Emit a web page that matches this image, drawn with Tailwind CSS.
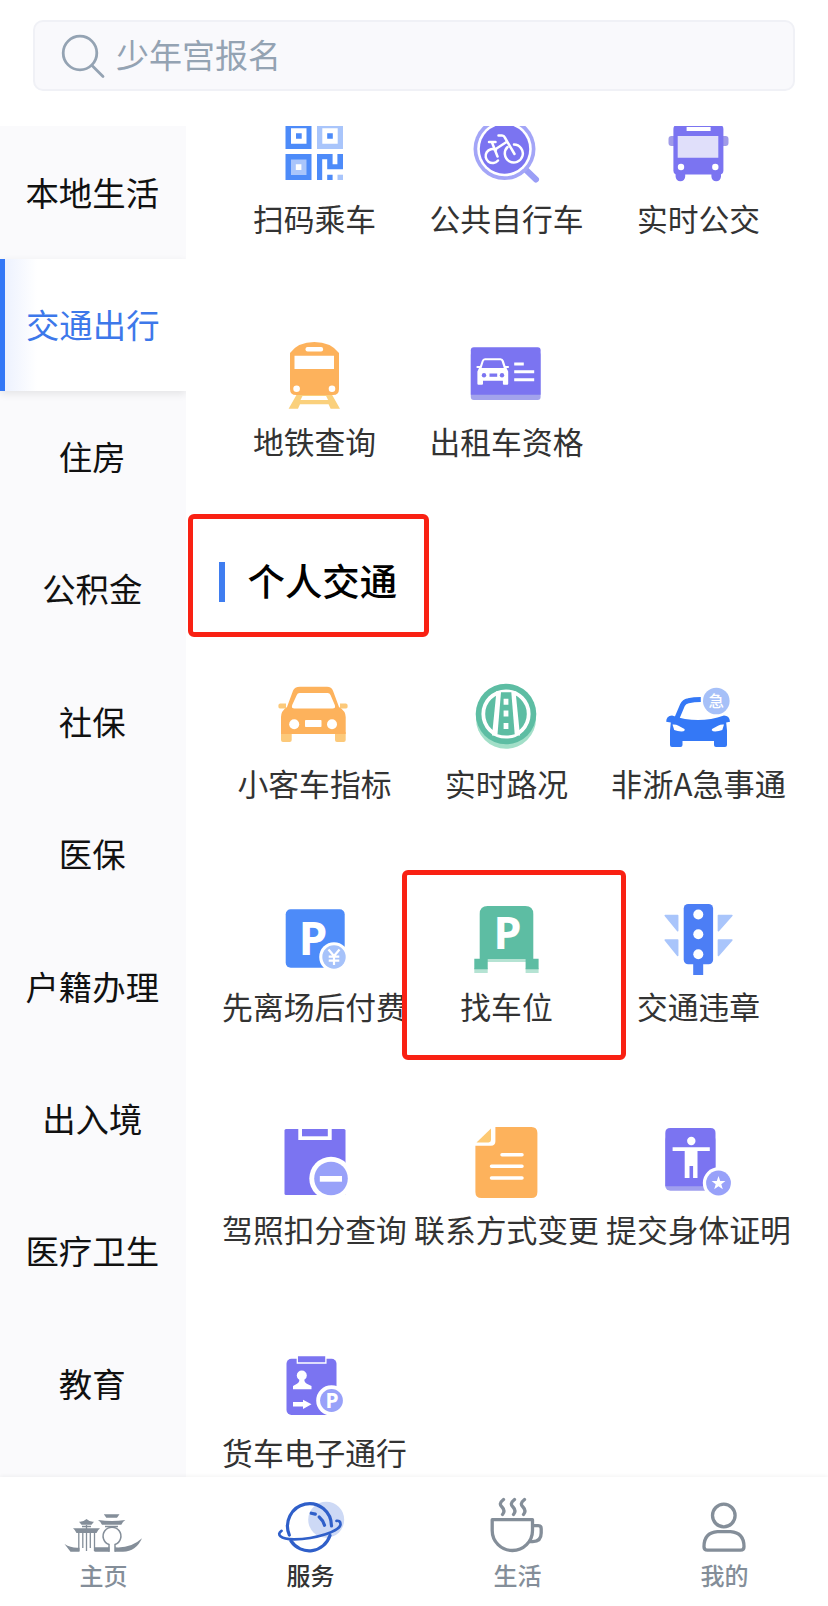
<!DOCTYPE html>
<html lang="zh-CN">

<head>
  <meta charset="UTF-8" />
  <meta name="viewport" content="width=device-width, initial-scale=1.0" />
  <title>服务</title>
  <script src="https://cdn.jsdelivr.net/npm/@tailwindcss/browser@4"></script>
</head>

<body class="bg-white font-['Noto_Sans_CJK_SC','Noto_Sans',sans-serif]">
  <div class="w-[828px] h-[1606px] flex flex-col overflow-hidden">

    <!-- Search -->
    <header class="h-[126px] shrink-0 px-[33px] pt-5">
      <div class="h-[71px] rounded-[10px] border-2 border-[#f0f1f6] bg-[#f9f9fc] flex items-center pl-[26px] text-[#94a3b3]">
        <svg class="w-[46px] h-[46px]" viewBox="0 0 46 46" fill="none" stroke="currentColor" stroke-width="2.8" stroke-linecap="round">
          <circle cx="19" cy="20" r="16.8" />
          <path d="M31 32.5L42 43.5" />
        </svg>
        <span class="ml-[9px] -mt-[3px] text-[33px] leading-[40px]">少年宫报名</span>
      </div>
    </header>

    <div class="flex h-[1351px] shrink-0">
      <!-- Categories -->
      <aside class="w-[185.5px] shrink-0 bg-[#fafafc] overflow-hidden text-[33.4px] text-[#111] text-center">
        <div class="h-[133px] pr-px pb-px flex items-center justify-center">本地生活</div>
        <div class="relative h-[132.4px] flex items-center justify-center border-l-[5px] border-[#3478f6] pr-[5px] pb-[3px] text-[#3d78ea] bg-linear-to-r from-[#edf2fe] to-white to-[32px] shadow-[0_3px_8px_rgba(0,0,0,0.09)]">交通出行</div>
        <div class="h-[132.4px] pr-px pb-[3px] flex items-center justify-center">住房</div>
        <div class="h-[132.4px] pr-px pb-[3px] flex items-center justify-center">公积金</div>
        <div class="h-[132.4px] pr-px pb-[3px] flex items-center justify-center">社保</div>
        <div class="h-[132.4px] pr-px pb-[3px] flex items-center justify-center">医保</div>
        <div class="h-[132.4px] pr-px pb-[3px] flex items-center justify-center">户籍办理</div>
        <div class="h-[132.4px] pr-px pb-[3px] flex items-center justify-center">出入境</div>
        <div class="h-[132.4px] pr-px pb-[3px] flex items-center justify-center">医疗卫生</div>
        <div class="h-[132.4px] pr-px pb-[3px] flex items-center justify-center">教育</div>
      </aside>

      <!-- Services -->
      <main class="flex-1 overflow-hidden px-[33px] text-[30.8px] leading-[40px] text-[#333] whitespace-nowrap">
        <div class="-mt-[12px] grid grid-cols-[192px_192px_192px] auto-rows-[223px]">
          <div class="flex flex-col items-center gap-1">
            <svg class="w-24 h-20 shrink-0 -ml-0.5" viewBox="0 0 96 80">
              <path fill="#4d8bf9" d="M19.5 9h26v26h-26zM19.5 40h26v26h-26z" />
              <path fill="#a9c5fb" d="M51 9h26v26H51z" />
              <path fill="#fff" d="M25 14.3h15.5v15.4H25zM56.3 14.3h15.4v15.4H56.3z" />
              <path fill="#4d8bf9" d="M30 19.2h5.7v5.6H30zM61.2 19.2h5.6v5.6h-5.6z" />
              <path fill="#a9c5fb" d="M25 45.5h15.5V61H25z" />
              <path fill="#fff" d="M29.8 50.2h5.6v5.8h-5.6z" />
              <path fill="#4d8bf9" d="M51 40h15.6v10.3h4.8V40H77v15.3H61.2V45.3h-5V66H51zM61.2 60.7h5.4V66h-5.4z" />
              <path fill="#a9c5fb" d="M71.5 60.7H77V66h-5.5z" />
            </svg>
            <span>扫码乘车</span>
          </div>
          <div class="flex flex-col items-center gap-1">
            <svg class="w-24 h-20 shrink-0 -ml-0.5" viewBox="0 0 96 80" fill="none" stroke-linecap="round" stroke-linejoin="round">
              <path stroke="#9a9ef6" stroke-width="6" d="M66 54l12 11.5" />
              <circle cx="46.5" cy="35" r="31" fill="#a3a5f7" />
              <circle cx="46.5" cy="35" r="27.3" fill="#fff" />
              <circle cx="46.5" cy="35" r="24.7" fill="#7b74f1" />
              <g stroke="#fff" stroke-width="2.5">
                <path d="M40 46.5a7 7 0 1 1-2-10.6" />
                <path d="M49.6 33A9 9 0 1 0 56 30.5" />
                <path d="M40.5 21.5h3.5q2 0 2.8 2L56.5 40M31 28h6.5M34 28.5l5.5 14M37 35.5l11.5-7.5" />
              </g>
            </svg>
            <span>公共自行车</span>
          </div>
          <div class="flex flex-col items-center gap-1">
            <svg class="w-24 h-20 shrink-0 -ml-0.5" viewBox="0 0 96 80">
              <path fill="#a09be8" d="M24 22h-2.5q-3 0-3 3v4q0 3 3 3H24zM73 22h2.5q3 0 3 3v4q0 3-3 3H73z" />
              <rect x="23.4" y="11" width="50" height="49.5" rx="4" fill="#7b74f1" />
              <path fill="#7b74f1" d="M25.6 58h9.6v4.5a4.8 4.8 0 0 1-9.6 0zM61.4 58H71v4.5a4.8 4.8 0 0 1-9.6 0z" />
              <path fill="#fff" d="M36.6 13h24v4h-24z" />
              <path fill="#e0dffa" d="M27.7 22h40.6v21.7H27.7z" />
              <circle cx="31" cy="53" r="3.2" fill="#fff" />
              <circle cx="65.3" cy="53" r="3.2" fill="#fff" />
            </svg>
            <span>实时公交</span>
          </div>
          <div class="flex flex-col items-center gap-1">
            <svg class="w-24 h-20 shrink-0 -ml-0.5" viewBox="0 0 96 80">
              <path fill="#fad07c" fill-rule="evenodd" d="M31 57h34.6l8.4 14.7h-9.4l-2-4.4H34l-2 4.4h-9.4zM36.5 59l-2 4h27.6l-2-4z" />
              <path fill="#fdb25c" d="M24 16Q32 5 48.3 5T73 16v36q0 6-6 6H30q-6 0-6-6z" />
              <rect x="39.5" y="10" width="17.6" height="4.5" rx="2" fill="#fff" />
              <path fill="#fff" d="M28.5 18.7H68V32H28.5z" />
              <circle cx="30.6" cy="51.8" r="3.3" fill="#fff" />
              <circle cx="66" cy="51.8" r="3.3" fill="#fff" />
            </svg>
            <span>地铁查询</span>
          </div>
          <div class="flex flex-col items-center gap-1">
            <svg class="w-24 h-20 shrink-0 -ml-0.5" viewBox="0 0 96 80">
              <rect x="12.8" y="15" width="69.8" height="48" rx="3" fill="#a3a3ec" />
              <path fill="#7b74f1" d="M15.8 10.3h63.8q3 0 3 3v44.4H12.8V13.3q0-3 3-3z" />
              <path fill="#fff" fill-rule="evenodd" d="M27 21.3h15.5q2.5 0 3.3 2.5l1.7 5.2h3.3v2h-2.3l1.7 3.5v12.3q0 1-1 1h-3.3q-1 0-1-1v-3H25v3q0 1-1 1h-3.6q-1 0-1-1V34.5L21 31h-2.4v-2H22l1.8-5.2q.8-2.5 3.2-2.5zM27 23.3q-1 0-1.3 1L23.6 31h22.2l-2.2-6.7q-.3-1-1.3-1z" />
              <path fill="#7b74f1" d="M31.5 36.5h7.7v3.3h-7.7z" />
              <circle cx="26" cy="38.2" r="2.2" fill="#7b74f1" />
              <circle cx="44" cy="38.2" r="2.2" fill="#7b74f1" />
              <path fill="none" stroke="#fff" stroke-width="3" d="M56.2 27h9.6M56.2 34.8h20M56.2 42.7h20" />
            </svg>
            <span>出租车资格</span>
          </div>
        </div>

        <!-- Section title -->
        <div class="relative h-[119px] flex items-start pt-[2px]">
          <div class="absolute -left-[30.5px] -top-[46px] w-[241px] h-[123px] rounded-md border-5 border-[#f92113]"></div>
          <i class="block w-[6px] h-10 bg-[#3f7df0]"></i>
          <h2 class="ml-[23px] text-[37.4px] font-medium leading-[37px] text-black">个人交通</h2>
        </div>

        <div class="grid grid-cols-[192px_192px_192px] auto-rows-[223px]">
          <div class="flex flex-col items-center gap-1">
            <svg class="w-24 h-20 shrink-0 -ml-0.5" viewBox="0 0 96 80">
              <path fill="#fcc97a" d="M14 24.5h6v5h-6q-1.7 0-1.7-2.5t1.7-2.5zM74 24.5h6q1.7 0 1.7 2.5T80 29.5h-6zM15 53h10.7v8q0 2-2 2H17q-2 0-2-2zM69 53h10.7v8q0 2-2 2H71q-2 0-2-2z" />
              <path fill="#fdb25c" fill-rule="evenodd" d="M34 7.7h27q4.5 0 6 4L73 28q6.7 4 6.7 10v17H15V38q0-6 6-10l6-16.3q1.5-4 7-4zM33.5 14q-2 0-2.7 2l-4.6 10q-1.2 3.5 2.3 3.5h38q3.5 0 2.3-3.5L64.5 16q-.8-2-2.8-2z" />
              <circle cx="28.2" cy="45.3" r="5" fill="#fff" />
              <circle cx="66" cy="45.3" r="5" fill="#fff" />
              <rect x="39" y="41" width="16.5" height="7" rx=".8" fill="#fff" />
            </svg>
            <span>小客车指标</span>
          </div>
          <div class="flex flex-col items-center gap-1">
            <svg class="w-24 h-20 shrink-0 -ml-0.5" viewBox="0 0 96 80">
              <circle cx="48" cy="39.7" r="30" fill="#a2dfc8" />
              <circle cx="48" cy="35" r="30.3" fill="#5dbda3" />
              <circle cx="48" cy="35" r="22.7" fill="#5dbda3" stroke="#fff" stroke-width="3.8" />
              <path fill="#fff" d="M38.5 12h19L62 56.5H34z" />
              <path fill="#5dbda3" d="M43 13.3h10.3l3.4 42q-8.5 2.5-17.2 0z" />
              <path fill="#fff" d="M45.6 19.7h4.8v6h-4.8zM45.6 31.5h4.8v6h-4.8zM45.6 44h4.8v6h-4.8z" />
            </svg>
            <span>实时路况</span>
          </div>
          <div class="flex flex-col items-center gap-1">
            <svg class="w-24 h-20 shrink-0 -ml-0.5" viewBox="0 0 96 80">
              <path fill="none" stroke="#3478f6" stroke-width="5" d="M50.8 20.5q-7 0-12.5 1.2-4.3.8-5.8 4.3L27 39" />
              <path fill="#3478f6" d="M22 36.5q13 4.5 26 4.5t26-4.5q5.5 0 6 6.2l-3.8.8.8 8V66q0 2-2 2H66q-2 0-2-2v-4H32.5v4q0 2-2 2H22q-2 0-2-2V51.5l.8-8-4.6-.8q0-5.7 5.8-6.2z" />
              <path fill="#fff" d="M22.5 45.5q3-.5 6 1.3l6 3.2q1 1.5-1 2.3-5 .5-9.3-1.3zM74 45.5q-3-.5-6 1.3L62 50q-1 1.5 1 2.3 5 .5 9.3-1.3z" />
              <circle cx="66.3" cy="22" r="13.3" fill="#a6c0f8" />
              <text x="66.3" y="27.7" font-size="15.5" font-weight="500" text-anchor="middle" fill="#fff">急</text>
            </svg>
            <span class="text-[31.2px]">非浙A急事通</span>
          </div>
          <div class="flex flex-col items-center gap-1">
            <svg class="w-24 h-20 shrink-0 -ml-0.5 overflow-visible" viewBox="0 0 96 80">
              <rect x="19.7" y="7.3" width="59" height="58.5" rx="5" fill="#4d8bf9" />
              <text x="47" y="53.3" font-size="46" font-weight="700" font-family="Noto Sans" text-anchor="middle" fill="#fff">P</text>
              <circle cx="68" cy="55" r="14.8" fill="#fff" />
              <circle cx="68" cy="55" r="11.7" fill="#a6c2fa" />
              <path fill="none" stroke="#fff" stroke-width="2.2" d="M62.5 47.5l5.5 6.5 5.5-6.5M68 54v9M62.7 54.7h10.6M62.7 58.7h10.6" />
            </svg>
            <span>先离场后付费</span>
          </div>
          <div class="relative flex flex-col items-center gap-1">
            <div class="absolute -left-[9px] -top-8 w-[224px] h-[190px] rounded-md border-5 border-[#f92113]"></div>
            <svg class="w-24 h-20 shrink-0 -ml-0.5 overflow-visible" viewBox="0 0 96 80">
              <path fill="#b5e3d3" d="M16.3 66h13.4v5H16.3zM67.6 66h13v5h-13zM29 56h39v4H29z" />
              <path fill="#5dbda3" d="M29.7 4h37.6q8 0 8 8v44.7h5.3v10.6h-13V57H29.7v10.3H16.3V56.7h5.4V12q0-8 8-8z" />
              <text x="49.5" y="46.8" font-size="45" font-weight="700" font-family="Noto Sans" text-anchor="middle" fill="#fff">P</text>
            </svg>
            <span>找车位</span>
          </div>
          <div class="flex flex-col items-center gap-1">
            <svg class="w-24 h-20 shrink-0 -ml-0.5" viewBox="0 0 96 80">
              <path fill="#a9c5fb" stroke="#a9c5fb" stroke-width="1.5" stroke-linejoin="round" d="M15.2 13.5h12.5v15.3zM15.2 38h12.5v15.5zM68.4 13.5h13.5l-13.5 15.3zM68.4 38h13.5l-13.5 15.5z" />
              <path fill="#4c7ef5" d="M43.2 60h10v13h-10z" />
              <rect x="33.7" y="2" width="29.4" height="60.3" rx="4.5" fill="#4c7ef5" />
              <circle cx="48.3" cy="12.5" r="5" fill="#fff" />
              <circle cx="48.3" cy="32.2" r="5" fill="#fff" />
              <circle cx="48.3" cy="52.3" r="5" fill="#fff" />
            </svg>
            <span>交通违章</span>
          </div>
          <div class="flex flex-col items-center gap-1">
            <svg class="w-24 h-20 shrink-0 -ml-0.5" viewBox="0 0 96 80">
              <rect x="18.5" y="4" width="61" height="66" rx="1.5" fill="#7b74f1" />
              <path fill="#fff" d="M32.3 3.5h33.4V15H32.3z" />
              <path fill="#7b74f1" d="M36 4h25.8v7.3H36z" />
              <circle cx="65" cy="53.5" r="21.7" fill="#fff" />
              <circle cx="65" cy="53.5" r="16.8" fill="#98a1f9" />
              <path fill="#fff" d="M53.8 51H76v5.7H53.8z" />
            </svg>
            <span>驾照扣分查询</span>
          </div>
          <div class="flex flex-col items-center gap-1">
            <svg class="w-24 h-20 shrink-0 -ml-0.5" viewBox="0 0 96 80">
              <path fill="#fdb25c" d="M37.4 2h36q6 0 6 6v59q0 6-6 6h-50q-6 0-6-6V20.7H33q4.4 0 4.4-4.4z" />
              <path fill="#fdc973" d="M33 3.5V15q0 2.4-2.4 2.4H18.5z" />
              <path fill="none" stroke="#fff" stroke-width="3.5" stroke-linecap="round" d="M44 29.7h20M33.5 41.3H64M33.5 53H64" />
            </svg>
            <span>联系方式变更</span>
          </div>
          <div class="flex flex-col items-center gap-1">
            <svg class="w-24 h-20 shrink-0 -ml-0.5" viewBox="0 0 96 80">
              <rect x="15.3" y="10" width="50.2" height="55.7" rx="5" fill="#a09fee" />
              <path fill="#7b74f1" d="M20.3 3h40.2q5 0 5 5v53.2H15.3V8q0-5 5-5z" />
              <circle cx="41.3" cy="16" r="4.2" fill="#fff" />
              <path fill="#fff" d="M22.6 22.3h37.2V26H47.5v27h-4.4V41h-3.6v12h-4.8V26H22.6z" />
              <circle cx="68.5" cy="58" r="15.7" fill="#fff" />
              <circle cx="68.5" cy="58" r="12.4" fill="#98a1f9" />
              <path fill="#fff" d="M68.5 51l1.7 4.9 5.2.1-4.1 3.2 1.5 5-4.3-2.9-4.3 2.9 1.5-5-4.1-3.2 5.2-.1z" />
            </svg>
            <span>提交身体证明</span>
          </div>
          <div class="flex flex-col items-center gap-1">
            <svg class="w-24 h-20 shrink-0 -ml-0.5" viewBox="0 0 96 80">
              <rect x="20.5" y="10.7" width="50" height="56.3" rx="5" fill="#7b74f1" />
              <path fill="#7b74f1" stroke="#fff" stroke-width="1.3" d="M31.3 7.7h28.6V15H31.3z" />
              <circle cx="35.8" cy="27.5" r="5" fill="#fff" />
              <path fill="#fff" d="M33.3 30h5q-.5 4 2.5 5.7l4.7 2.3v3.3H27V38l4-2.3q3-1.7 2.3-5.7zM27 54h10v-2.3l8.5 4.6L37 61v-2.500H27z" />
              <circle cx="65.5" cy="52.5" r="15.3" fill="#fff" />
              <circle cx="65.5" cy="52.5" r="11.4" fill="#98a1f9" />
              <text x="66" y="60" font-size="21" font-weight="700" font-family="Noto Sans" text-anchor="middle" fill="#fff">P</text>
            </svg>
            <span>货车电子通行</span>
          </div>
        </div>
      </main>
    </div>

    <!-- Tab bar -->
    <nav class="relative h-[129px] shrink-0 grid grid-cols-4 bg-white pt-5 text-2xl leading-7 text-[#848e99] font-medium shadow-[0_-1px_4px_rgba(0,0,0,0.05)]">
      <div class="flex flex-col items-center gap-2">
        <svg class="w-20 h-14 -ml-0.5" viewBox="0 0 80 56" fill="currentColor">
          <path d="M1.5 47q7 4.5 15 3.7v4H7.5zM31.5 50.3h15v4.4h-15zM52 50.3q16 1.2 27-9-6 13.4-19 13.4h-8z" />
          <path d="M10 31.2h27q-2.5 2-3.5 4.8h-20q-1-2.8-3.5-4.8zM16 24.8q4 .5 7.5-2.8 3.5 3.3 7.5 2.8l-2.5 3h-10zM40.8 17.3h15.7l-2.5 3.5H43.3zM35 23q14 2 27.3 0-3 2-4 4.7H39q-1-2.7-4-4.7z" />
          <path fill="none" stroke="currentColor" stroke-width="1.3" d="M15.8 36v18M23.5 28v26M31.5 36v18M19.8 36v15M27.3 36v15M19 29.5h9M42 29.5h13" />
          <path fill="none" stroke="currentColor" stroke-width="1.5" d="M46 54.7V47.5A8.9 8.9 0 1 1 52 47.5V54.7" />
        </svg>
        <span>主页</span>
      </div>
      <div class="flex flex-col items-center gap-2">
        <svg class="w-20 h-14 -ml-0.5" viewBox="0 0 80 56" fill="none" stroke="#2f5fc9" stroke-width="3.2" stroke-linecap="round">
          <circle cx="56.2" cy="22.7" r="18" fill="#cdd9f5" stroke="none" />
          <path d="M19.3 38A22 22.5 0 1 1 61.5 29M60 38.5A22 22.5 0 0 1 21 44" />
          <path stroke-width="2.7" d="M11.5 33.8C6.5 37 9.5 42.3 24 42.3 46 42 70.5 34 70.5 27.2 70.5 24.5 69 23.5 66.5 23.8" />
          <path d="M41.3 16.2l4 .9M49.2 20q3.8 3.2 5.3 8.3" />
        </svg>
        <span class="text-[#333]">服务</span>
      </div>
      <div class="flex flex-col items-center gap-2">
        <svg class="w-20 h-14 -ml-0.5" viewBox="0 0 80 56" fill="none" stroke="currentColor" stroke-width="3.3" stroke-linecap="round" stroke-linejoin="round">
          <path d="M15.2 22.7H55.5V33.5A20.15 20 0 0 1 15.2 33.5z" />
          <path d="M56 28.7h5.2q3 0 3 3V36q0 8.5-8.5 8.7H53" />
          <path d="M26.5 2.5c-4.5 3.5-3.5 5.5-1.5 7.5s3 4.5.5 7.5M37.5 2.5c-4.5 3.5-3.5 5.5-1.5 7.5s3 4.5.5 7.5M47.5 2.5c-4.5 3.5-3.5 5.5-1.5 7.5s3 4.5.5 7.5" />
        </svg>
        <span>生活</span>
      </div>
      <div class="flex flex-col items-center gap-2">
        <svg class="w-20 h-14 -ml-0.5" viewBox="0 0 80 56" fill="none" stroke="currentColor" stroke-width="3.3">
          <circle cx="39.8" cy="18.5" r="11.3" />
          <path d="M33.5 34.7h13q13.5 1 13.5 15 0 3.5-3.5 3.5h-33q-3.5 0-3.5-3.5 0-14 13.5-15z" />
        </svg>
        <span>我的</span>
      </div>
    </nav>
  </div>
</body>

</html>
